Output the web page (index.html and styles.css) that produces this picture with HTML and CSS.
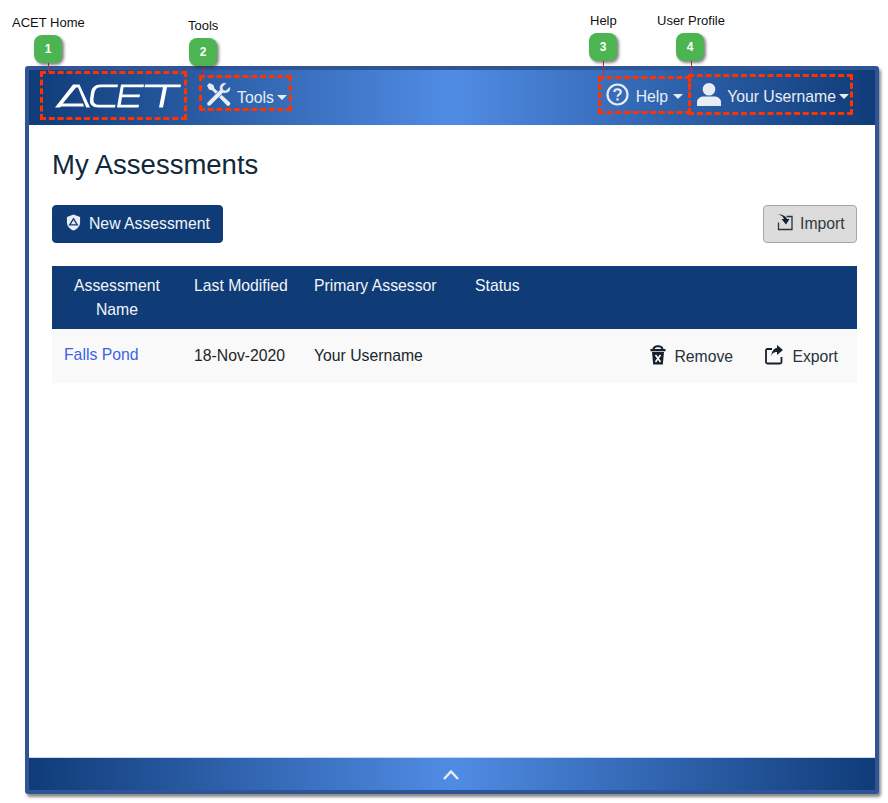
FILE: index.html
```html
<!DOCTYPE html>
<html lang="en">
<head>
<meta charset="utf-8">
<title>My Assessments</title>
<link rel="stylesheet" href="styles.css">
</head>
<body>
<div class="window">
  <nav class="navbar">
    <a class="logo">
      <svg width="130" height="30" viewBox="0 0 130 30" fill="#fff" aria-label="ACET">
        <path d="M1 25.500 19 2.500H25.500L36 25.500H32.300L24 5.500H22L8.800 21.500H29L30 24.500H7.500L5.500 25.500Z"/>
        <path d="M64 2.500H46Q38.500 2.500 37 10L36 17Q35 25.500 44 25.500H61L61.500 22.800H45Q39 22.800 39.500 17L40.500 10.500Q41.500 5.200 47 5.200H63.500Z"/>
        <path d="M67 2.500H90L89.500 5.200H69.500L68.500 12.500H86L85.500 15.200H68L66.800 22.800H85L84.500 25.500H63Z"/>
        <path d="M91 2.500H127L126.500 5.200H113L109 25.500H105L109 5.200H90.500Z"/>
      </svg>
    </a>
    <a class="nav-item tools">
      <svg width="25" height="25" viewBox="0 0 25 25" fill="#e8edf5">
        <path d="M1 3.500 3.500 1 7.500 3 8.500 6.500 24 20.500C25.300 22 22.500 25 21 23.500L6.500 8.500 3 7.500Z"/>
        <path d="M24 4.500 20 8.300 17.300 7.800 16.800 5 20.700 1C16.500 -.5 12.500 2.800 13.800 7.800L1.500 20.200C-.5 22.500 2.500 25.500 4.800 23.300L17 11C21.800 12.300 25.800 8.800 24 4.500Z" stroke="#2e62ab" stroke-width=".7"/>
      </svg>
      <span class="nav-label">Tools</span><i class="caret"></i>
    </a>
    <div class="spacer"></div>
    <a class="nav-item help">
      <svg width="23" height="23" viewBox="0 0 23 23" fill="none" stroke="#e8edf5" stroke-width="2.200">
        <circle cx="11.500" cy="11.500" r="10"/>
        <path d="M8.300 9C8.300 5.300 14.800 5.300 14.800 9 14.800 11.300 11.500 11.300 11.500 13.800"/>
        <path d="M11.500 15.300V17.500"/>
      </svg>
      <span class="nav-label">Help</span><i class="caret"></i>
    </a>
    <a class="nav-item user">
      <svg width="24" height="23" viewBox="0 0 24 23" fill="#e8edf5">
        <circle cx="12" cy="6.300" r="6.300"/>
        <path d="M0 23V19C0 15.500 3.500 13.500 7 13.500H17C20.500 13.500 24 15.500 24 19V23Z"/>
      </svg>
      <span class="nav-label">Your Username</span><i class="caret"></i>
    </a>
  </nav>

  <main class="content">
    <h1 class="title">My Assessments</h1>
    <div class="actions">
      <button class="btn btn-primary">
        <svg width="15" height="17" viewBox="0 0 16 18">
          <path d="M8 .5 15 3V9C15 13 12 16 8 17.500 4 16 1 13 1 9V3Z" fill="#e8edf5"/>
          <path d="M8 5 12 11.500H4Z" fill="none" stroke="#103d79" stroke-width="1.500"/>
        </svg>
        <span>New Assessment</span>
      </button>
      <button class="btn btn-secondary">
        <svg width="16" height="17" viewBox="0 0 16 17" fill="none" stroke="#26323c" stroke-width="1.300">
          <path d="M9.500 2.500H15V15.500H1.500V8.500"/>
          <path d="M0 .5C3.500 .5 6 2 7 5L4.500 5 9 10.500 12.500 5 10 5C9 2 5 0 0 .5Z" fill="#14202c" stroke="none"/>
        </svg>
        <span>Import</span>
      </button>
    </div>
    <table class="grid">
      <thead>
        <tr>
          <th class="col-name">Assessment Name</th>
          <th class="col-date">Last Modified</th>
          <th class="col-owner">Primary Assessor</th>
          <th class="col-status">Status</th>
          <th class="col-act"></th>
          <th class="col-act2"></th>
        </tr>
      </thead>
      <tbody>
        <tr>
          <td><a class="link">Falls Pond</a></td>
          <td>18-Nov-2020</td>
          <td>Your Username</td>
          <td></td>
          <td class="action">
            <svg width="16" height="20" viewBox="0 0 16 20" fill="#14202c">
              <path d="M2.500 4.500C2.500 1.500 5.500 .3 8 .3S13.500 1.500 13.500 4.500H11.800C11.300 2.800 9.800 2.200 8 2.200S4.700 2.800 4.200 4.500Z"/>
              <path d="M.5 4H15.500V6.300H.5Z"/>
              <path d="M2 7H14L12.800 19.500H3.200Z"/>
              <path d="M5.500 10 10.500 17M10.500 10 5.500 17" stroke="#fff" stroke-width="1.600"/>
            </svg>
            Remove
          </td>
          <td class="action export">
            <svg width="19" height="20" viewBox="0 0 19 20" fill="none" stroke="#14202c" stroke-width="1.800">
              <path d="M7 4H2.500Q1 4 1 5.500V17Q1 18.500 2.500 18.500H15Q16.500 18.500 16.500 17V12"/>
              <path d="M6 13C6 9 8.500 7 12 7V10L18 5 12 0V3C8 3.500 6 8 6 13Z" fill="#14202c" stroke="none"/>
            </svg>
            Export
          </td>
        </tr>
      </tbody>
    </table>
  </main>

  <footer class="footer">
    <svg width="18" height="11" viewBox="0 0 18 11" fill="none" stroke="#e8edf5" stroke-width="2.400">
      <path d="M2 10 9 2.500 16 10"/>
    </svg>
  </footer>
</div>

<div class="callouts">
  <span class="note n1">ACET Home</span>
  <span class="note n2">Tools</span>
  <span class="note n3">Help</span>
  <span class="note n4">User Profile</span>
  <span class="stem s1"></span><span class="stem s2"></span><span class="stem s3"></span><span class="stem s4"></span>
  <span class="badge b1">1</span>
  <span class="badge b2">2</span>
  <span class="badge b3">3</span>
  <span class="badge b4">4</span>
  <span class="box h1"></span>
  <span class="box h2"></span>
  <span class="box h3"></span>
  <span class="box h4"></span>
</div>
</body>
</html>
```
FILE: styles.css
```css
* { box-sizing: border-box; }
html, body { margin: 0; height: 803px; overflow: hidden; background: #fff; }
body {
  position: relative;
  font-family: "Liberation Sans", Arial, sans-serif;
  font-size: 15.75px;
  color: #212529;
  padding: 66px 0 0 25px;
}
.window {
  width: 854px;
  height: 728px;
  border: 4px solid #2f5597;
  border-radius: 3px;
  background: #fff;
  display: flex;
  flex-direction: column;
  box-shadow: 2px 3px 3px rgba(60, 60, 60, .6);
}
.navbar, .footer {
  background: linear-gradient(90deg, #0f3b78 0%, #508ce4 50%, #0f3b78 100%);
}
.navbar {
  height: 55px;
  flex: none;
  display: flex;
  align-items: center;
  color: #e8edf5;
}
.logo { margin-left: 25px; display: flex; width: 151px; margin-bottom: 2px; }
.nav-item { display: flex; align-items: center; }
.nav-item svg { margin-bottom: 6px; flex: none; }
.tools { margin-left: 1px; }
.tools .nav-label { margin-left: 6px; }
.tools .caret { margin-left: 3px; }
.help { margin-bottom: 2px; }
.help svg, .user svg { margin-bottom: 4px; }
.help .nav-label { margin-left: 7px; }
.help .caret { margin-left: 5px; }
.user { margin-left: 14px; margin-right: 26px; margin-bottom: 2px; }
.user .nav-label { margin-left: 6px; }
.user .caret { margin-left: 3px; }
.caret {
  display: inline-block;
  margin-left: 4px;
  border-top: 5px solid #e8edf5;
  border-left: 5px solid transparent;
  border-right: 5px solid transparent;
}
.spacer { flex: 1; }
.content { flex: 1; min-height: 0; padding: 24px 18px 0 23px; }
.title {
  margin: 0;
  font-size: 27.5px;
  line-height: 32px;
  font-weight: 400;
  color: #10283c;
}
.actions {
  margin-top: 24px;
  display: flex;
  justify-content: space-between;
}
.btn {
  height: 38px;
  border-radius: 4px;
  font: 15.75px "Liberation Sans", Arial, sans-serif;
  display: flex;
  align-items: center;
  white-space: nowrap;
  gap: 8px;
  padding: 0 13px;
}
.btn svg { flex: none; margin-bottom: 3px; }
.btn-primary { background: #0f3c77; border: 1px solid #0f3c77; color: #f2f5f9; width: 171px; }
.btn-secondary { background: #dcdcdc; border: 1px solid #a3a7aa; color: #33393f; width: 94px; gap: 7px; }
.grid {
  width: 805px;
  margin-top: 23px;
  border-collapse: collapse;
  table-layout: fixed;
}
.grid th {
  background: #0f3c77;
  color: #f2f5f9;
  font-weight: 400;
  text-align: left;
  vertical-align: top;
  height: 63px;
  padding: 8px 12px 7px;
  line-height: 24px;
}
.grid th.col-name { text-align: center; width: 130px; }
.col-date { width: 120px; }
.col-owner { width: 161px; }
.col-status { width: 187px; }
.col-act { width: 115px; }
.grid td {
  background: #f9f9f9;
  height: 54px;
  padding: 0 12px;
  vertical-align: middle;
  white-space: nowrap;
  color: #212529;
}
.link { color: #3b63e8; display: inline-block; margin-bottom: 2px; }
.grid td.action { color: #26323c; padding: 0 0 2px; }
.action svg { vertical-align: -3px; margin-right: 4px; }
.export svg { margin-right: 4px; }
.footer {
  height: 33px;
  flex: none;
  border-top: 1px solid #c5d6ee;
  display: flex;
  justify-content: center;
  align-items: center;
  padding: 0 3px 0 0;
}
.callouts { position: absolute; inset: 0; pointer-events: none; }
.note { position: absolute; font-size: 13px; color: #111; white-space: nowrap; }
.n1 { left: 12px; top: 15px; }
.n2 { left: 188px; top: 18px; }
.n3 { left: 590px; top: 13px; }
.n4 { left: 657px; top: 13px; }
.badge {
  position: absolute;
  width: 28px;
  height: 28px;
  border-radius: 8px;
  background: #4cb551;
  color: #fff;
  font: bold 12px/28px "Liberation Sans", Arial, sans-serif;
  text-align: center;
  box-shadow: 2px 2px 3px rgba(50, 50, 50, .6);
}
.b1 { left: 34px; top: 35px; }
.b2 { left: 189px; top: 38px; }
.b3 { left: 589px; top: 33px; }
.b4 { left: 676px; top: 33px; }
.stem { position: absolute; width: 1px; background: #d02050; }
.s1 { left: 48px; top: 63px; height: 9px; }
.s2 { left: 203px; top: 66px; height: 10px; }
.s3 { left: 603px; top: 61px; height: 15px; }
.s4 { left: 691px; top: 61px; height: 14px; }
.box { position: absolute; border: 3px dashed #ff3300; }
.h1 { left: 40px; top: 71px; width: 147px; height: 49px; }
.h2 { left: 199px; top: 75px; width: 93px; height: 36px; }
.h3 { left: 598px; top: 76px; width: 93px; height: 38px; }
.h4 { left: 688px; top: 74px; width: 165px; height: 41px; }
```
